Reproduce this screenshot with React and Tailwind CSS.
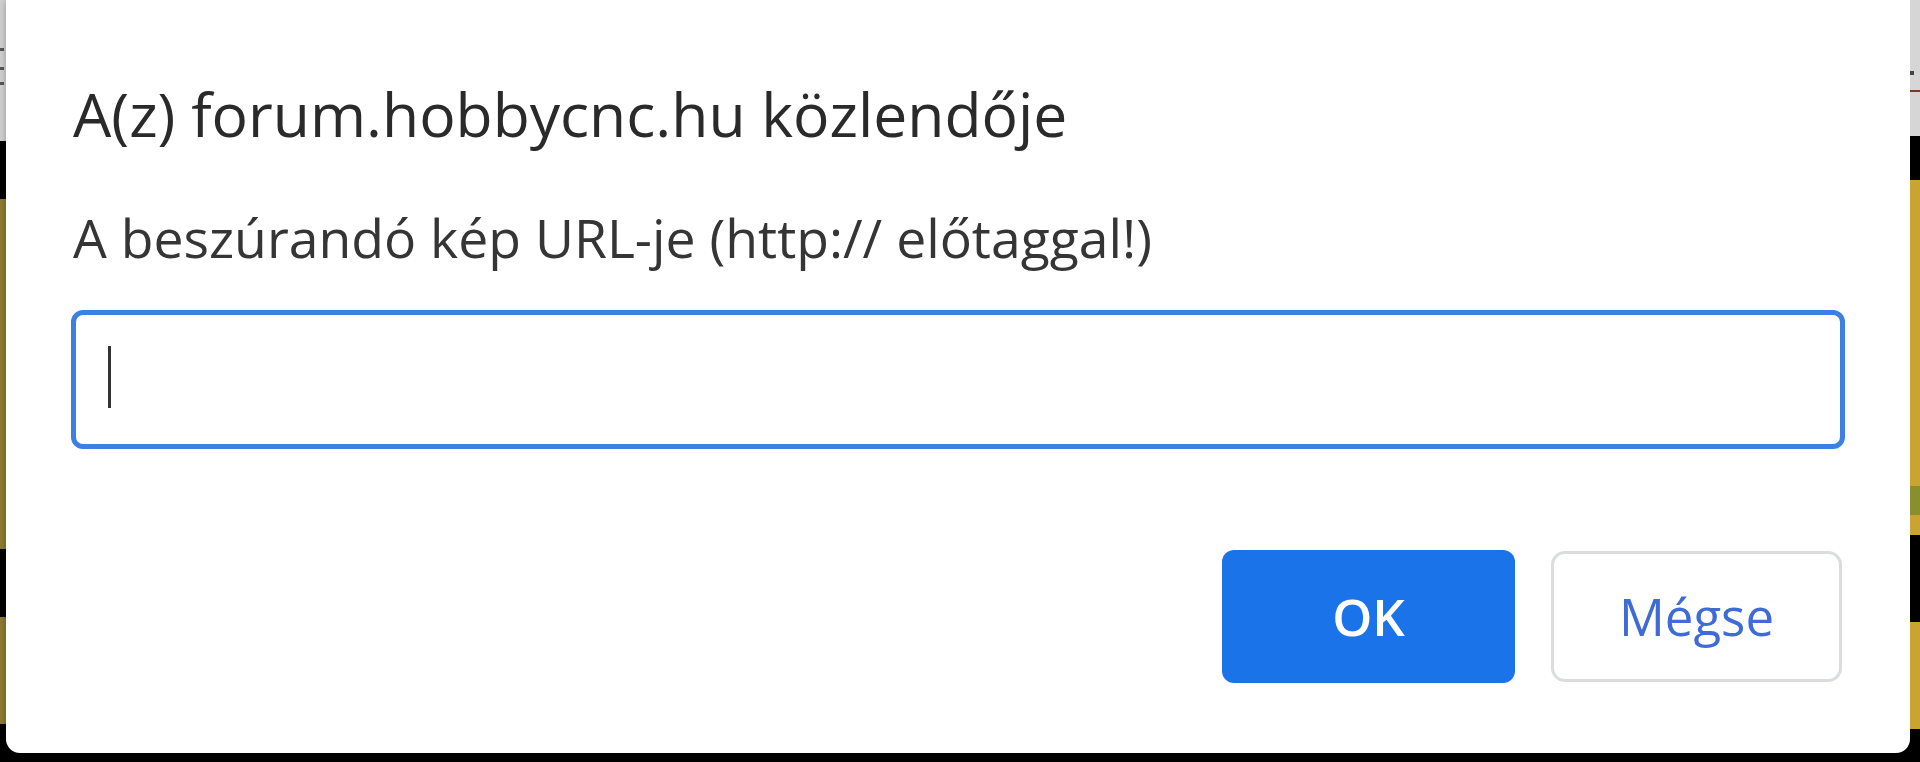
import React from 'react';

function LeftStrip() {
  return (
    <div className="flex w-[6px] shrink-0 flex-col">
      <div className="flex h-[141px] flex-col bg-[#cfcfcf]">
        <div className="mt-[48px] h-[3px] w-[4px] bg-[#555]" />
        <div className="mt-[16px] h-[3px] w-[4px] bg-[#555]" />
        <div className="mt-[12px] h-[3px] w-[4px] bg-[#555]" />
      </div>
      <div className="h-[58px] bg-black" />
      <div className="h-[350px] bg-[#8c7a33]" />
      <div className="h-[68px] bg-black" />
      <div className="h-[107px] bg-[#8c7a33]" />
      <div className="flex-1 bg-black" />
    </div>
  );
}

function RightStrip() {
  return (
    <div className="flex w-[10px] shrink-0 flex-col">
      <div className="flex h-[136px] flex-col bg-[#d6d6d6]">
        <div className="mt-[71px] h-[4px] w-[4px] bg-[#444]" />
        <div className="mt-[15px] h-[2px] w-full bg-[#7a3a2a]" />
      </div>
      <div className="h-[44px] bg-black" />
      <div className="h-[306px] bg-[#c9a431]" />
      <div className="h-[29px] bg-[#8a8f2e]" />
      <div className="h-[20px] bg-[#c9a431]" />
      <div className="h-[87px] bg-black" />
      <div className="h-[107px] bg-[#c9a431]" />
      <div className="flex-1 bg-black" />
    </div>
  );
}

export default function App() {
  return (
    <div className="flex h-[762px] w-full flex-col overflow-hidden bg-black font-['Open_Sans',sans-serif]">
      <div className="flex h-[753px]">
        <LeftStrip />
        <div className="flex flex-1 flex-col rounded-b-[14px] bg-white px-[65px] pt-[84px] pb-[70px] shadow-[0_2px_6px_rgba(0,0,0,0.3)]">
          <h1 className="pl-[2px] text-[60.6px] leading-none font-normal text-[#2a2a2a]">
            A(z) forum.hobbycnc.hu közlendője
          </h1>
          <p className="mt-[66px] pl-[2px] text-[53.5px] leading-none text-[#353535]">
            A beszúrandó kép URL-je (http:// előtaggal!)
          </p>
          <div className="mt-[46px] flex h-[139px] items-center rounded-[12px] border-[5px] border-[#3d7fe3] pl-[32px]">
            <span className="mb-[6px] h-[62px] w-[3px] bg-[#333]" />
          </div>
          <div className="mt-auto flex items-center justify-end gap-[36px] pr-[3px]">
            <button className="h-[133px] w-[293px] rounded-[12px] bg-[#1a73e8] text-[51px] font-semibold text-white">
              OK
            </button>
            <button className="h-[131px] w-[291px] rounded-[14px] border-[3px] border-[#dadce0] bg-white text-[51px] font-medium text-[#3f6bd6]">
              Mégse
            </button>
          </div>
        </div>
        <RightStrip />
      </div>
    </div>
  );
}
